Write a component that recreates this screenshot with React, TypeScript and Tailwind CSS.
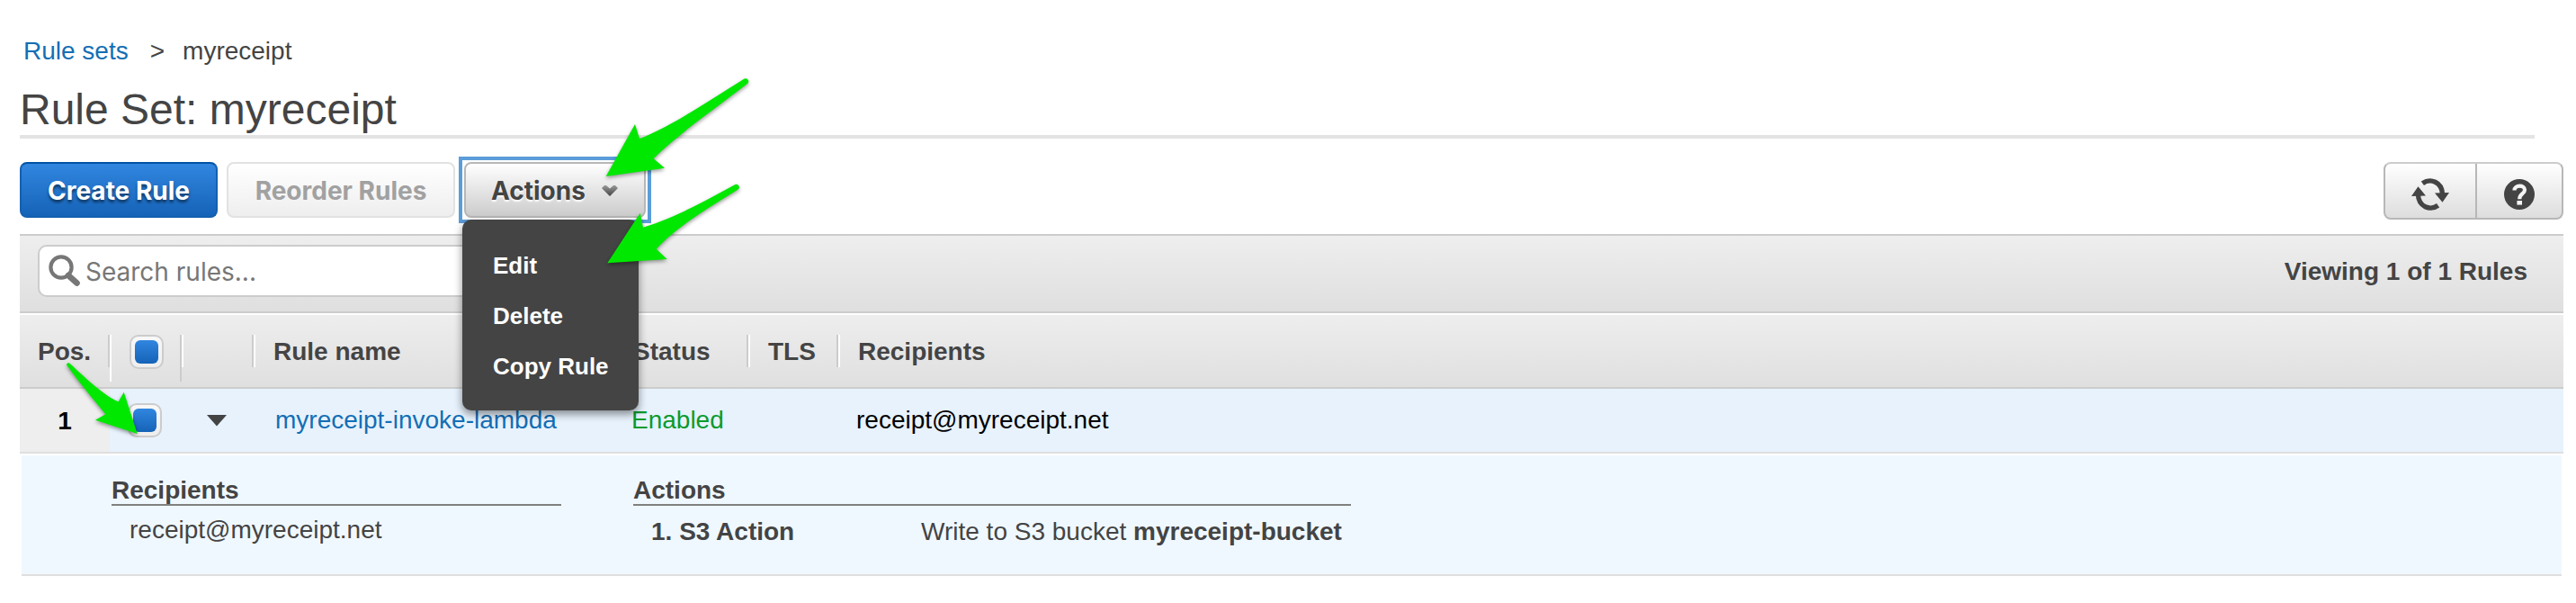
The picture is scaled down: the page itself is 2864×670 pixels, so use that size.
import type { ReactNode } from "react";

const BUTTON =
  "h-[62px] rounded-lg border-2 pt-0.5 text-center font-[Inter,sans-serif] text-[28px] leading-8 font-bold";

function Checkbox({ label }: { label: string }) {
  return (
    <input
      type="checkbox"
      defaultChecked
      aria-label={label}
      className="block size-[38px] appearance-none rounded-[10px] border-2 border-[#cccccc] bg-linear-to-b from-[#f8f8f8] to-[#eeeeee] p-1 before:block before:size-[26px] before:rounded-[6px] before:content-[''] checked:before:bg-linear-to-b checked:before:from-[#3186df] checked:before:to-[#1463b8]"
    />
  );
}

function HeadCell({ children, first, last, tall }: { children?: ReactNode; first?: boolean; last?: boolean; tall?: boolean }) {
  return (
    <th
      scope="col"
      className="h-[84px] border-t-2 border-b-2 border-t-white border-b-[#cccccc] p-0 pt-[22px] text-left align-top font-bold"
    >
      <div
        className={`flex ${tall ? "h-[52px] items-start" : "h-9 items-center pt-0.5"} ${
          first ? "" : "border-l-2 border-l-white"
        } ${last ? "" : "border-r-2 border-r-[#cccccc]"} pl-5`}
      >
        {children}
      </div>
    </th>
  );
}

function Arrow({ className, d, box }: { className: string; d: string; box: string }) {
  return (
    <svg
      aria-hidden="true"
      viewBox={box}
      className={`pointer-events-none absolute overflow-visible drop-shadow-[0_2px_2px_rgba(0,0,0,0.4)] ${className}`}
    >
      <path d={d} fill="#00e800" />
    </svg>
  );
}

function ActionsMenu() {
  return (
    <div className="relative -m-1.5 border-4 border-[#5b9dd9] p-0.5">
      <button
        type="button"
        aria-haspopup="menu"
        aria-expanded="true"
        className={`${BUTTON} flex w-[202px] items-center justify-between border-[#b7b7b7] bg-linear-to-b from-white to-[#cccccc] pr-7 pl-7 text-[#444444] [text-shadow:0_2px_2px_#fff]`}
      >
        Actions
        <svg aria-hidden="true" viewBox="0 0 20 14" className="h-3.5 w-5">
          <defs>
            <linearGradient id="chevron" x1="0" y1="0" x2="0" y2="1">
              <stop offset="0" stopColor="#999" />
              <stop offset="1" stopColor="#444" />
            </linearGradient>
          </defs>
          <path d="M1 4 L4 1 H6 L10 4.5 L14 1 H16 L19 4 L10 13 Z" fill="url(#chevron)" />
        </svg>
      </button>
      <ul
        role="menu"
        className="absolute top-[66px] left-0 z-10 w-[196px] rounded-[10px] bg-[#444444] pt-[23px] pb-[21px] text-[26px] leading-8 font-bold text-white shadow-[0_4px_10px_rgba(0,0,0,0.45)] [text-shadow:0_3px_3px_rgba(0,0,0,0.8)]"
      >
        {["Edit", "Delete", "Copy Rule"].map((item) => (
          <li key={item} role="none">
            <button type="button" role="menuitem" className="block h-14 w-full pl-[34px] text-left">
              {item}
            </button>
          </li>
        ))}
      </ul>
      <Arrow
        className="-top-[98px] left-[156px] z-20 h-[120px] w-[172px]"
        box="670 80 172 120"
        d="M827.5 87.6 C790 111 744 142 711 154 L706 138 L673.7 196 L739 186.7 L726.7 176.3 C750 152 795 121 831.5 92.6 A3.3 3.3 0 0 0 827.5 87.6 Z"
      />
      <Arrow
        className="top-[22px] left-[156px] z-20 h-[100px] w-[160px]"
        box="670 200 160 100"
        d="M816.5 205.6 C785 223 748 243 715 252.7 L711.7 236.7 L675.3 292.3 L741.7 288 L729.7 276.7 C752 252 788 231 820.5 210.6 A3.2 3.2 0 0 0 816.5 205.6 Z"
      />
    </div>
  );
}

export default function App() {
  return (
    <main className="bg-white pt-[41px] pr-3.5 pb-[30px] pl-[22px] font-['Liberation_Sans',Arial,sans-serif] text-[28px] leading-8 text-[#444444]">
      <nav aria-label="Breadcrumb" className="flex pl-1">
        <a href="#rule-sets" className="text-[#146eb4]">
          Rule sets
        </a>
        <span className="mr-5 ml-6">&gt;</span>
        <span>myreceipt</span>
      </nav>
      <h1 className="mt-[22px] mr-8 border-b-4 border-[#e3e3e3] pb-px text-5xl leading-[54px]">
        Rule Set: myreceipt
      </h1>

      <div className="mt-[26px] flex h-16 items-start gap-2.5">
        <button
          type="button"
          className={`${BUTTON} w-[220px] border-[#1460b0] border-t-[#0052a5] bg-linear-to-b from-[#3186df] to-[#1463b8] text-white [text-shadow:0_3px_3px_rgba(0,0,0,0.5)]`}
        >
          Create Rule
        </button>
        <button
          type="button"
          disabled
          className={`${BUTTON} w-[254px] border-[#e2e2e2] bg-linear-to-b from-white to-[#eeeeee] text-[#a1a1a1]`}
        >
          Reorder Rules
        </button>
        <ActionsMenu />
        <div className="ml-auto flex h-16 rounded-lg border-2 border-[#b7b7b7] border-t-[#cccccc] bg-linear-to-b from-white to-[#dddddd]">
          <button
            type="button"
            aria-label="Refresh"
            className="flex w-[102px] items-center justify-center border-r-2 border-[#b7b7b7] pt-2"
          >
            <svg aria-hidden="true" viewBox="0 0 42 36" className="h-9 w-[42px]">
              <g fill="none" stroke="#444" strokeWidth="5.4">
                <path d="M12.4 5.8 C21 -0.5 34 4 34.6 18" />
                <path d="M29.6 30.2 C21 36.5 8 32 7.4 18" />
              </g>
              <path d="M26 16.5 L42 16 L34.5 26.8 Z M16 19.5 L0 20 L7.5 9.2 Z" fill="#444" />
            </svg>
          </button>
          <button type="button" aria-label="Help" className="flex w-[94px] items-center justify-center pt-2">
            <svg aria-hidden="true" viewBox="0 0 34 34" className="size-[34px]">
              <circle cx="17" cy="17" r="17" fill="#444" />
              <path
                d="M11.5 12.5 C11.5 6 23 6 23 12 C23 16.5 17.2 16 17.2 22.2"
                fill="none"
                stroke="#f4f4f4"
                strokeWidth="4.2"
              />
              <rect x="14.4" y="24" width="5.6" height="4.6" fill="#f4f4f4" />
            </svg>
          </button>
        </div>
      </div>

      <section className="mt-4">
        <div className="flex items-center justify-between border-t-2 border-b-2 border-[#cccccc] bg-linear-to-b from-[#eeeeee] to-[#dfdfdf] pt-2.5 pr-10 pb-4 pl-5">
          <div className="relative">
            <svg aria-hidden="true" viewBox="0 0 36 36" className="absolute top-[11px] left-3 size-9">
              <circle cx="14" cy="14" r="11.6" fill="none" stroke="#777" strokeWidth="4.2" />
              <path d="M22 23 L31.5 31.5" stroke="#777" strokeWidth="6.6" strokeLinecap="round" />
            </svg>
            <input
              type="search"
              aria-label="Search rules"
              placeholder="Search rules..."
              className="block h-[58px] w-[520px] rounded-[10px] border-2 border-[#cccccc] bg-white pt-0.5 pl-[51px] font-[Inter,sans-serif] text-[28px] text-[#444444] placeholder:text-[#777777]"
            />
          </div>
          <p className="pt-0.5 font-bold">Viewing 1 of 1 Rules</p>
        </div>

        <table className="w-full table-fixed border-separate border-spacing-0">
          <colgroup>
            <col className="w-[100px]" />
            <col className="w-20" />
            <col className="w-20" />
            <col className="w-[400px]" />
            <col className="w-[150px]" />
            <col className="w-[100px]" />
            <col />
          </colgroup>
          <thead className="bg-linear-to-b from-[#eeeeee] to-[#dfdfdf]">
            <tr>
              <HeadCell first>Pos.</HeadCell>
              <HeadCell tall>
                <Checkbox label="Select all rules" />
              </HeadCell>
              <HeadCell />
              <HeadCell>Rule name</HeadCell>
              <HeadCell>Status</HeadCell>
              <HeadCell>TLS</HeadCell>
              <HeadCell last>Recipients</HeadCell>
            </tr>
          </thead>
          <tbody>
            <tr className="bg-[#e7f2fd] [&>td]:h-[72px] [&>td]:border-b-2 [&>td]:border-[#dfdfdf]">
              <td className="bg-[#eeeeee] pt-0.5 text-center font-bold text-black">1</td>
              <td className="relative pl-5">
                <Checkbox label="Select rule myreceipt-invoke-lambda" />
                <Arrow
                  className="-top-8 -left-[52px] z-20 h-[90px] w-[90px]"
                  box="70 400 90 90"
                  d="M74 405.5 C88 425 104 444 117.3 460.3 L106 466.7 L152.7 482 L137.7 435.7 L131.7 446.3 C116 440 95 420 77.5 403.8 A2.2 2.2 0 0 0 74 405.5 Z"
                />
              </td>
              <td className="pl-7">
                <button type="button" aria-label="Collapse rule details" className="block">
                  <svg aria-hidden="true" viewBox="0 0 22 13" className="h-[13px] w-[22px]">
                    <path d="M0 0 H22 L11 12.5 Z" fill="#444" />
                  </svg>
                </button>
              </td>
              <td className="pl-6">
                <a href="#rule" className="text-[#146eb4]">
                  myreceipt-invoke-lambda
                </a>
              </td>
              <td className="pl-5 text-[#0b9a2d]">Enabled</td>
              <td />
              <td className="pl-5 text-black">receipt@myreceipt.net</td>
            </tr>
            <tr>
              <td colSpan={7} className="px-0.5 pt-0.5">
                <div className="flex border-b-2 border-[#dfdfdf] bg-[#f0f8ff] px-[100px] pt-[22px] pb-[31px]">
                  <div className="w-[500px]">
                    <h2 className="h-[34px] border-b-2 border-[#808080] leading-[34px] font-bold">Recipients</h2>
                    <p className="mt-[11px] pl-5">receipt@myreceipt.net</p>
                  </div>
                  <div className="ml-20 w-[798px]">
                    <h2 className="h-[34px] border-b-2 border-[#808080] leading-[34px] font-bold">Actions</h2>
                    <div className="mt-[13px] flex pl-5">
                      <span className="w-[300px] font-bold">1. S3 Action</span>
                      <span>
                        Write to S3 bucket <b className="font-bold">myreceipt-bucket</b>
                      </span>
                    </div>
                  </div>
                </div>
              </td>
            </tr>
          </tbody>
        </table>
      </section>
    </main>
  );
}
